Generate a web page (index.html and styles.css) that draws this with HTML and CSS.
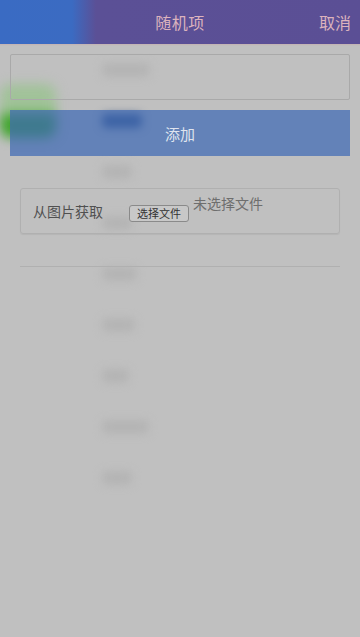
FILE: index.html
```html
<!DOCTYPE html>
<html lang="zh">
<head>
<meta charset="utf-8">
<link rel="stylesheet" href="styles.css">
</head>
<body>
<div class="stage">
  <div class="under">
    <div class="under-head"></div>
    <div class="green"></div>
    <div class="list">
      <span class="smudge w48"></span>
      <span class="smudge w40 blue"></span>
      <span class="smudge w30"></span>
      <span class="smudge w30"></span>
      <span class="smudge w35"></span>
      <span class="smudge w33"></span>
      <span class="smudge w27"></span>
      <span class="smudge w47"></span>
      <span class="smudge w30"></span>
    </div>
  </div>
  <div class="modal">
    <header class="bar">
      <span class="bar-side"></span>
      <h1 class="title">随机项</h1>
      <span class="bar-side cancel">取消</span>
    </header>
    <div class="form">
      <div class="input"></div>
      <button class="add">添加</button>
      <div class="filebox">
        <span class="file-label">从图片获取</span>
        <span class="file-btn">选择文件</span>
        <span class="file-none">未选择文件</span>
      </div>
      <hr class="divider">
    </div>
  </div>
</div>
</body>
</html>
```

FILE: styles.css
```css
html, body {
  margin: 0;
  padding: 0;
  background: #c0c0c0;
  font-family: "Noto Sans CJK SC", "Noto Sans", sans-serif;
}
.stage {
  display: grid;
  width: 360px;
  height: 637px;
  overflow: hidden;
}
.under, .modal {
  grid-area: 1 / 1;
}
.under {
  display: flex;
  flex-direction: column;
}
.under-head {
  height: 44px;
}
.green {
  width: 56px;
  height: 54px;
  margin-top: 40px;
  margin-left: 0;
  background: linear-gradient(180deg, #a0c298 0, #a0c298 27px, #3fa52c 33px, #3fa52c 100%);
  filter: blur(6px);
  border-radius: 10px;
}
.list {
  display: flex;
  flex-direction: column;
  align-items: flex-start;
  gap: 37px;
  padding-left: 102px;
  margin-top: -75px;
}
.smudge {
  height: 14px;
  background: #b4b4b4;
  border-radius: 5px;
  filter: blur(4px);
}
.smudge.blue { background: #3a5480; }
.w48 { width: 48px; }
.w47 { width: 47px; }
.w40 { width: 40px; }
.w35 { width: 35px; }
.w33 { width: 33px; }
.w30 { width: 30px; }
.w27 { width: 27px; }

.modal {
  display: flex;
  flex-direction: column;
  isolation: isolate;
}
.bar {
  height: 44px;
  display: flex;
  align-items: center;
  justify-content: space-between;
  padding: 0 9px;
  background: linear-gradient(90deg, #3a6bc3 0, #3b6bc2 72px, #5b5096 96px, #5b4f95 100%);
  box-shadow: 0 1px 1px rgba(200, 160, 160, 0.35);
}
.bar-side {
  width: 60px;
  font-size: 16px;
  color: #dcb3bd;
  text-align: right;
}
.title {
  margin: 0;
  font-size: 16px;
  font-weight: normal;
  color: #dcb3bd;
  letter-spacing: 0.5px;
}
.form {
  display: flex;
  flex-direction: column;
  padding: 10px 10px 0;
}
.input {
  height: 44px;
  border: 1px solid #a9a9a9;
  border-radius: 2px;
}
.add {
  margin-top: 10px;
  height: 46px;
  border: none;
  border-radius: 0;
  background: rgba(62, 106, 180, 0.72);
  color: #dfe4ee;
  font-family: inherit;
  font-size: 15px;
  padding: 0;
}
.filebox {
  margin: 32px 10px 0;
  height: 44px;
  border: 1px solid #b0b0b0;
  border-radius: 3px;
  box-shadow: 0 1px 1px rgba(0, 0, 0, 0.06);
  display: flex;
  align-items: center;
  padding-left: 12px;
}
.file-label {
  font-size: 14px;
  color: #505050;
  width: 96px;
}
.file-btn {
  font-size: 11px;
  color: #333;
  border: 1px solid #8a8a8a;
  border-radius: 3px;
  background: #c8c8c8;
  height: 15px;
  line-height: 15px;
  padding: 0 7px;
  margin-top: 5px;
}
.file-none {
  font-size: 14px;
  color: #6e6e6e;
  margin-left: 4px;
  align-self: flex-start;
  margin-top: 4px;
}
.divider {
  margin: 32px 10px 0;
  border: none;
  height: 1px;
  background: #b0b0b0;
}
```
